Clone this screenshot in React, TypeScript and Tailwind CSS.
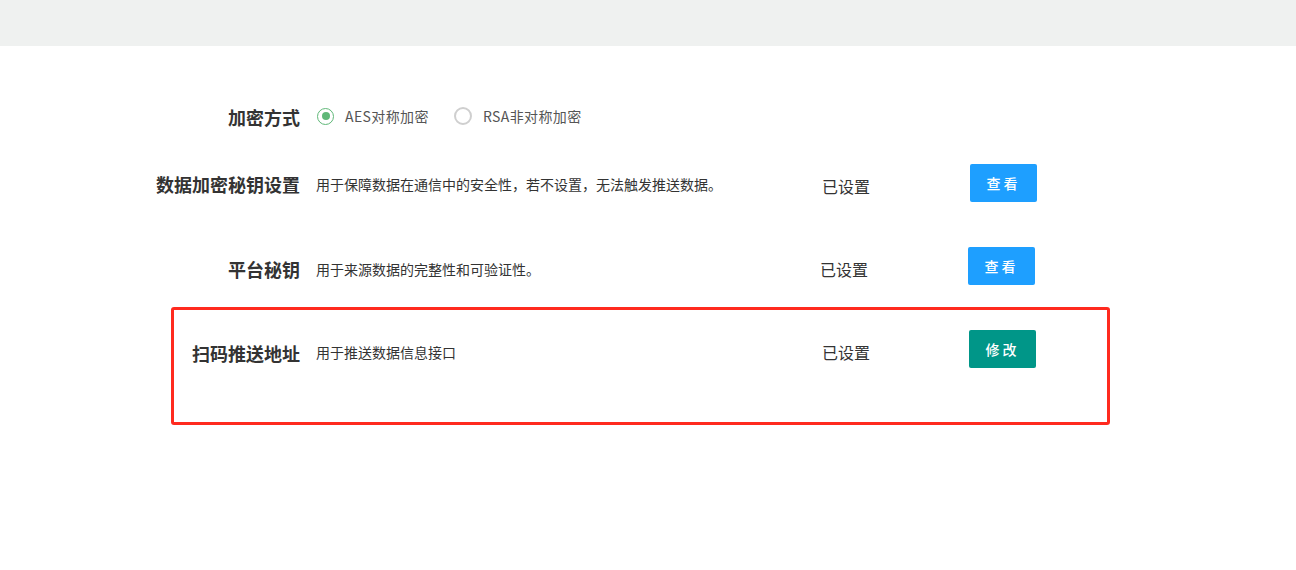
import React from "react";

const font = { fontFamily: '"Noto Sans CJK SC", "Noto Sans", sans-serif' };

function Btn({ text, teal }: { text: string; teal?: boolean }) {
  return (
    <button
      className={`h-[38px] w-[67px] rounded-[2px] text-[14px] font-medium text-white tracking-[3px] ${teal ? "bg-[#009688]" : "bg-[#1e9fff]"}`}
    >
      {text}
    </button>
  );
}

export default function App() {
  return (
    <div className="min-h-[570px] w-full bg-white text-[#333]" style={font}>
      <div className="h-[46px] bg-[#eff1f0]" />

      {/* Row 1 */}
      <div className="mt-[51px] flex h-[38px] items-center">
        <div className="w-[300px] shrink-0 whitespace-nowrap text-right text-[18px] font-bold leading-none pt-[2px]">
          加密方式
        </div>
        <div className="ml-[17px] flex items-center text-[14px] tracking-[0.4px] text-[#555]">
          <span className="flex h-[17px] w-[17px] items-center justify-center rounded-full border-[1.5px] border-[#5fb878]">
            <span className="h-[8px] w-[8px] rounded-full bg-[#5fb878]" />
          </span>
          <span className="ml-[11px]">AES对称加密</span>
          <span className="ml-[25px] flex h-[18px] w-[18px] rounded-full border-[2px] border-[#cfcfcf]" />
          <span className="ml-[11px]">RSA非对称加密</span>
        </div>
      </div>

      {/* Row 2 */}
      <div className="mt-[29px] flex h-[38px] items-center">
        <div className="w-[300px] shrink-0 whitespace-nowrap text-right text-[18px] font-bold leading-none pt-[1px]">
          数据加密秘钥设置
        </div>
        <div className="ml-[16px] w-[506px] shrink-0 text-[14px] leading-none pt-[1px]">
          用于保障数据在通信中的安全性，若不设置，无法触发推送数据。
        </div>
        <div className="w-[148px] shrink-0 text-[16px] leading-none pt-[5px]">已设置</div>
        <Btn text="查看" />
      </div>

      {/* Row 3 */}
      <div className="mt-[45px] flex h-[38px] items-center">
        <div className="w-[300px] shrink-0 whitespace-nowrap text-right text-[18px] font-bold leading-none pt-[6px]">
          平台秘钥
        </div>
        <div className="ml-[16px] w-[504px] shrink-0 text-[14px] leading-none pt-[5px]">
          用于来源数据的完整性和可验证性。
        </div>
        <div className="w-[148px] shrink-0 text-[16px] leading-none pt-[5px]">已设置</div>
        <Btn text="查看" />
      </div>

      {/* Row 4 (highlighted) */}
      <div className="ml-[171px] mt-[22px] h-[118px] w-[939px] rounded-[3px] border-[3px] border-[#ff2a1f] pt-[20px]">
        <div className="flex h-[38px] items-center">
          <div className="w-[126px] shrink-0 whitespace-nowrap text-right text-[18px] font-bold leading-none pt-[8px]">
            扫码推送地址
          </div>
          <div className="ml-[16px] w-[506px] shrink-0 text-[14px] leading-none pt-[6px]">
            用于推送数据信息接口
          </div>
          <div className="w-[147px] shrink-0 text-[16px] leading-none pt-[5px]">已设置</div>
          <Btn text="修改" teal />
        </div>
      </div>
    </div>
  );
}
